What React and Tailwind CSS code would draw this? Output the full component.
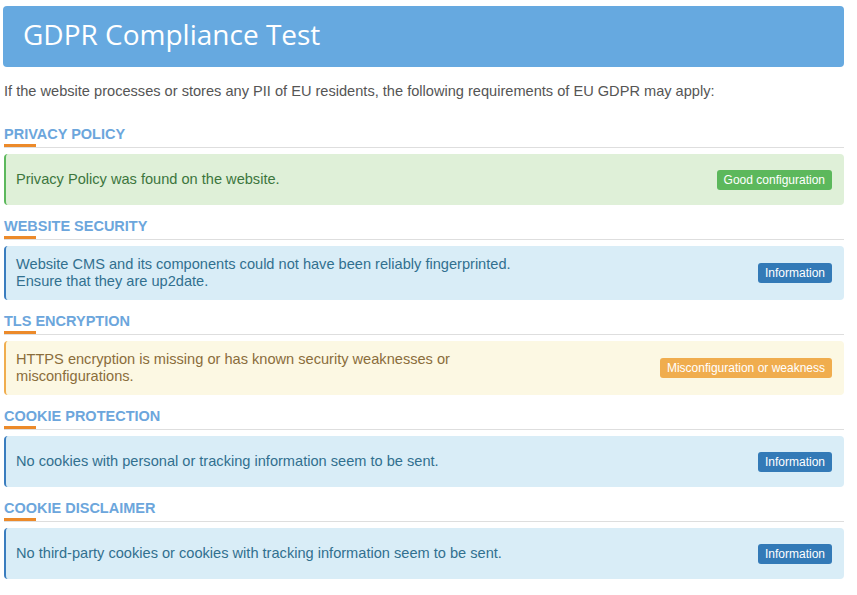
import React from 'react';

const SECTIONS = [
    {
        title: 'PRIVACY POLICY',
        lines: ['Privacy Policy was found on the website.'],
        badge: 'Good configuration',
        tone: 'good',
    },
    {
        title: 'WEBSITE SECURITY',
        lines: [
            'Website CMS and its components could not have been reliably fingerprinted.',
            'Ensure that they are up2date.',
        ],
        badge: 'Information',
        tone: 'info',
    },
    {
        title: 'TLS ENCRYPTION',
        lines: ['HTTPS encryption is missing or has known security weaknesses or', 'misconfigurations.'],
        badge: 'Misconfiguration or weakness',
        tone: 'warn',
    },
    {
        title: 'COOKIE PROTECTION',
        lines: ['No cookies with personal or tracking information seem to be sent.'],
        badge: 'Information',
        tone: 'info',
    },
    {
        title: 'COOKIE DISCLAIMER',
        lines: ['No third-party cookies or cookies with tracking information seem to be sent.'],
        badge: 'Information',
        tone: 'info',
    },
];

const TONES = {
    good: {
        box: 'bg-[#dff0d8] text-[#3c763d] border-[#5cb85c]',
        badge: 'bg-[#5cb85c]',
    },
    info: {
        box: 'bg-[#d9edf7] text-[#31708f] border-[#3a7dbf]',
        badge: 'bg-[#337ab7]',
    },
    warn: {
        box: 'bg-[#fcf8e3] text-[#8a6d3b] border-[#f0ad4e]',
        badge: 'bg-[#f0ad4e]',
    },
};

function Section({ section }) {
    const tone = TONES[section.tone];
    return (
        <div className="mt-[12px]">
            <h3 className="text-[14.5px] leading-[18px] font-bold text-[#6ca6dc]">{section.title}</h3>
            <div className="mt-[1px] w-[32px] h-[3px] bg-[#ec8a2a]" />
            <div className="h-px bg-[#dedede]" />
            <div
                className={`mt-[6px] flex items-center justify-between min-h-[51px] py-[10px] pl-[10px] pr-[12px] border-l-2 rounded-[4px] ${tone.box}`}
            >
                <div className="text-[14.6px] leading-[17px]">
                    {section.lines.map((line) => (
                        <div key={line}>{line}</div>
                    ))}
                </div>
                <span className={`text-white text-[12px] leading-[20px] px-[7px] rounded-[3px] ${tone.badge}`}>
                    {section.badge}
                </span>
            </div>
        </div>
    );
}

export default function App() {
    return (
        <div className="bg-white w-[857px] h-[595px] overflow-hidden font-['Liberation_Sans',Arial,sans-serif]">
            <div className="pl-[3px] w-[844px] pt-[6px]">
                <div className="h-[61px] bg-[#66a9e0] rounded-[4px] flex items-center pl-[20px]">
                    <h1 className="text-white text-[28px] font-['Open_Sans',sans-serif] leading-none -mt-[6px]">
                        GDPR Compliance Test
                    </h1>
                </div>
            </div>
            <div className="pl-[4px] w-[844px]">
                <p className="mt-[15px] text-[14.6px] leading-[18px] text-[#555555]">
                    If the website processes or stores any PII of EU residents, the following requirements of EU GDPR may apply:
                </p>
                <div className="mt-[25px]">
                    {SECTIONS.map((s) => (
                        <Section key={s.title} section={s} />
                    ))}
                </div>
            </div>
        </div>
    );
}
